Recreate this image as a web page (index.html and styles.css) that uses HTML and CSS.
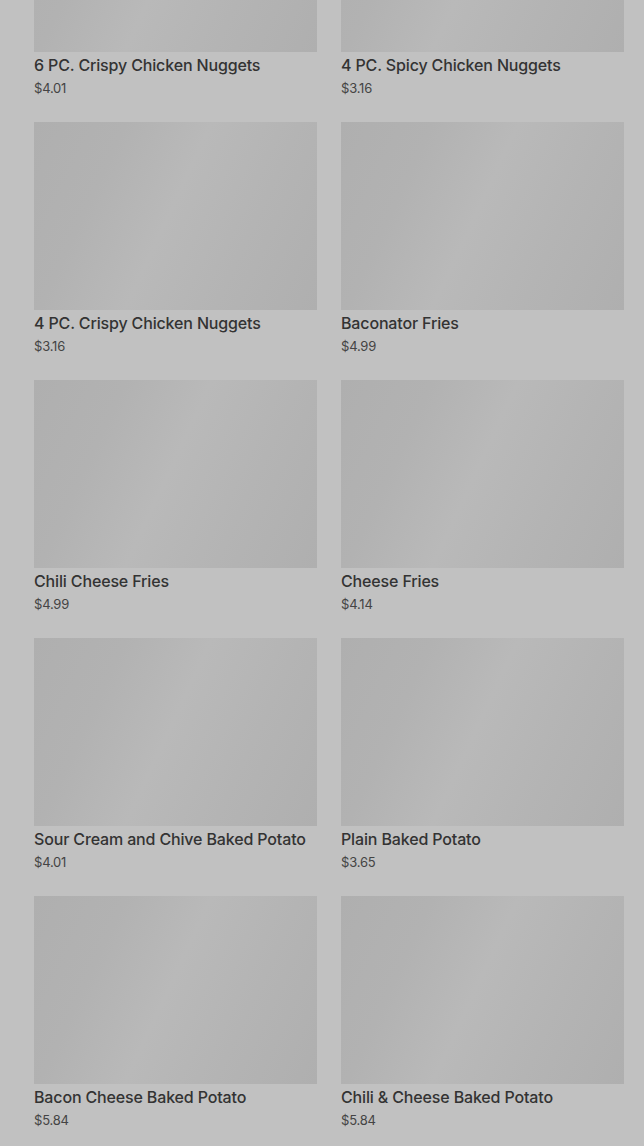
FILE: index.html
```html
<!DOCTYPE html>
<html lang="en">
<head>
<meta charset="utf-8">
<title>Menu</title>
<link rel="stylesheet" href="styles.css">
</head>
<body>
<main class="menu">
  <div class="grid">
    <article class="card"><div class="thumb"></div><h3 class="name">6 PC. Crispy Chicken Nuggets</h3><p class="price">$4.01</p></article>
    <article class="card"><div class="thumb"></div><h3 class="name">4 PC. Spicy Chicken Nuggets</h3><p class="price">$3.16</p></article>
    <article class="card"><div class="thumb"></div><h3 class="name">4 PC. Crispy Chicken Nuggets</h3><p class="price">$3.16</p></article>
    <article class="card"><div class="thumb"></div><h3 class="name">Baconator Fries</h3><p class="price">$4.99</p></article>
    <article class="card"><div class="thumb"></div><h3 class="name">Chili Cheese Fries</h3><p class="price">$4.99</p></article>
    <article class="card"><div class="thumb"></div><h3 class="name">Cheese Fries</h3><p class="price">$4.14</p></article>
    <article class="card"><div class="thumb"></div><h3 class="name">Sour Cream and Chive Baked Potato</h3><p class="price">$4.01</p></article>
    <article class="card"><div class="thumb"></div><h3 class="name">Plain Baked Potato</h3><p class="price">$3.65</p></article>
    <article class="card"><div class="thumb"></div><h3 class="name">Bacon Cheese Baked Potato</h3><p class="price">$5.84</p></article>
    <article class="card"><div class="thumb"></div><h3 class="name">Chili &amp; Cheese Baked Potato</h3><p class="price">$5.84</p></article>
  </div>
</main>
</body>
</html>
```

FILE: styles.css
```css
html, body {
  margin: 0;
  padding: 0;
  background: #c1c1c1;
  overflow: hidden;
}
body {
  font-family: Inter, "Noto Sans", Roboto, sans-serif;
  color: #333333;
}
.menu {
  padding: 0 20px 0 34px;
}
.grid {
  margin-top: -136px;
  display: grid;
  grid-template-columns: 283px 283px;
  column-gap: 24px;
  row-gap: 25px;
}
.card {
  display: flex;
  flex-direction: column;
}
.thumb {
  height: 188px;
  background: linear-gradient(115deg, #afafaf 0%, #b2b2b2 25%, #b9b9b9 48%, #b4b4b4 72%, #afafaf 100%);
}
.name {
  margin: 3px 0 0;
  font-size: 16px;
  line-height: 20px;
  font-weight: 500;
  letter-spacing: -0.15px;
  color: #333333;
  white-space: nowrap;
}
.price {
  margin: 4px 0 0;
  font-size: 13px;
  line-height: 18px;
  font-weight: 400;
  letter-spacing: -0.2px;
  color: #444444;
}
```
